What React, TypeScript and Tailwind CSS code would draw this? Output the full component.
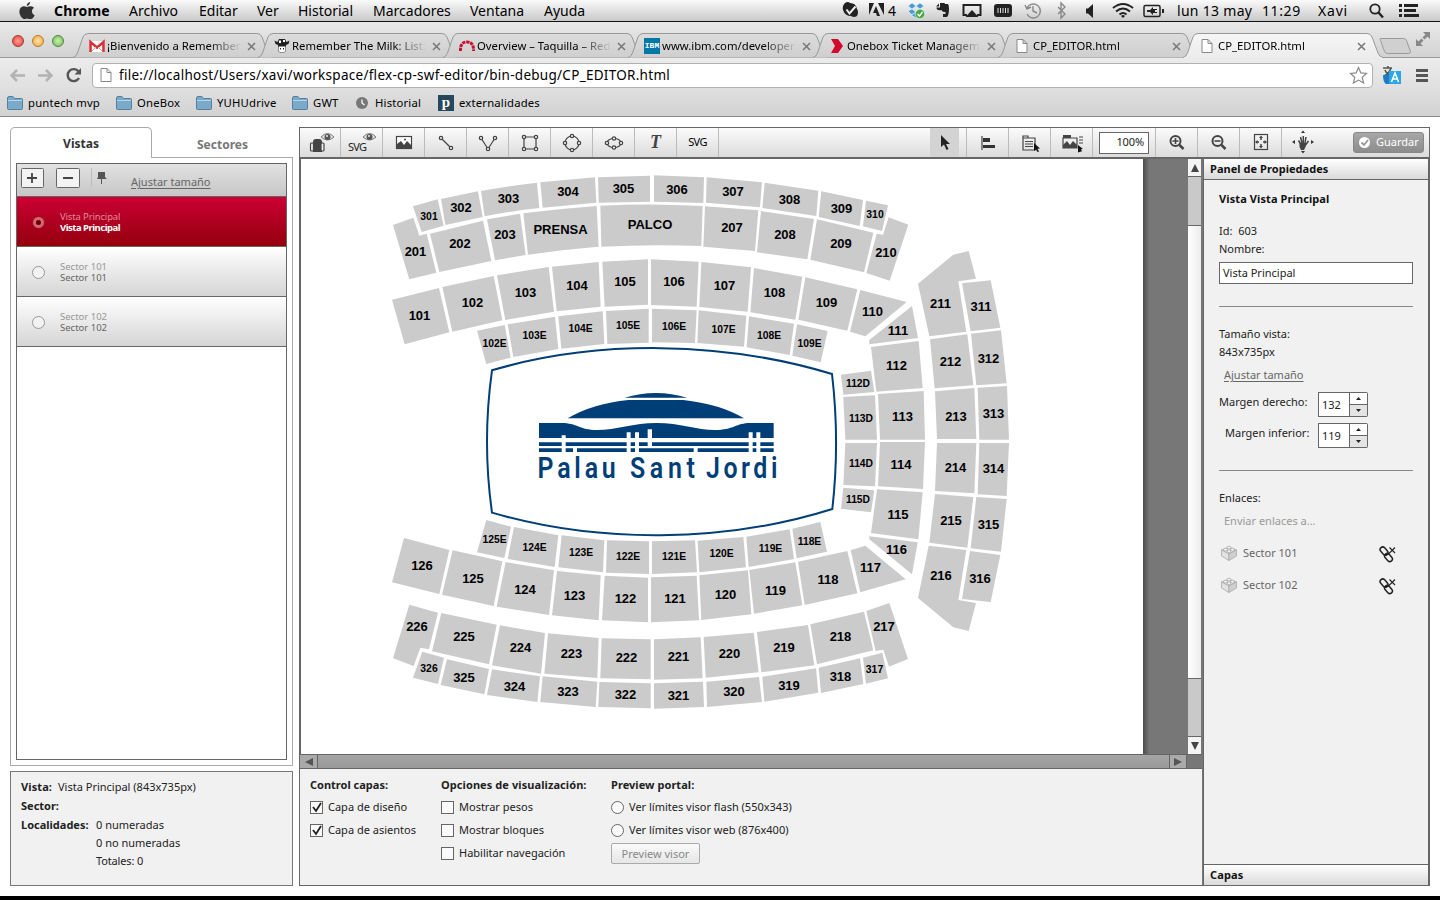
import React from "react";

type Block = [label: string, x: number, y: number, shape: string];
type Quadrant = { origin: string; blocks: Block[] };

// Block outlines are in third-of-a-pixel units from each quadrant's origin; labels are in canvas pixels.
const quadrants: Quadrant[] = [
  {
    origin: "translate(380 165) scale(.33333)",
    blocks: [
      ["301", 429, 217, "M99,124 173,103 191,182 125,201Z"],
      ["302", 461, 208, "M183,102 294,79 308,156 196,180Z"],
      ["303", 508.5, 199, "M303,78Q390,62 471,53L478,129Q400,137 314,154Z"],
      ["304", 568, 192, "M481,52 645,37 649,113 488,128Z"],
      ["305", 623.5, 189, "M654,37 810,32 810,110 656,113Z"],
      ["306", 677, 190, "M822,31 972,37 970,114 822,110Z"],
      ["201", 415.5, 252, "M39,180 100,158 118,212 140,206 169,323 88,343Z"],
      ["202", 460, 244, "M150,206 309,167 334,288 178,321Z"],
      ["203", 505, 235, "M321,163 420,146 437,270 345,286Z"],
      ["PRENSA", 560.5, 230, "M430,145Q540,131 650,123L656,245Q550,253 444,269Z"],
      ["PALCO", 650, 225, "M661,122Q815,114 968,123L964,243Q815,237 664,245Z"],
      ["101", 419.5, 316, "M36,404 177,369 208,502 74,538Z"],
      ["102", 472.5, 303, "M187,366 341,333 367,466 217,500Z"],
      ["103", 525.5, 293, "M351,331 506,306 522,440 376,465Z"],
      ["104", 577, 286, "M516,305 656,291 662,425 530,439Z"],
      ["105", 625, 282, "M667,290 804,283 804,419 674,425Z"],
      ["106", 674, 282, "M813,283 956,290 950,425 813,420Z"],
      ["102E", 494.5, 344, "M291,497 374,480 392,578 319,597Z"],
      ["103E", 534.5, 336, "M383,478 525,455 535,552 400,576Z"],
      ["104E", 580.5, 329, "M535,454 668,439 673,537 544,551Z"],
      ["105E", 628, 326, "M678,438 806,431 806,533 682,537Z"],
      ["106E", 674, 327, "M816,431 950,436 945,534 816,532Z"],
    ],
  },
  {
    origin: "translate(680 165) scale(.33333)",
    blocks: [
      ["307", 733, 192, "M80,37 246,52 240,127 78,113Z"],
      ["308", 789.5, 200, "M254,53 415,77 409,153 247,129Z"],
      ["309", 841.5, 209, "M424,79 549,105 539,183 416,156Z"],
      ["310", 875, 215, "M558,107 624,121 606,198 549,184Z"],
      ["207", 732, 228, "M75,124 235,136 225,258 70,245Z"],
      ["208", 785, 235, "M243,138 402,162 382,283 231,262Z"],
      ["209", 841, 244, "M411,163 580,203 552,322 391,284Z"],
      ["210", 886, 253, "M590,206 609,209 626,157 685,179 629,347 559,324Z"],
      ["107", 724.5, 286, "M64,291 213,307 203,440 58,426Z"],
      ["108", 774.5, 293, "M222,309 367,335 346,464 211,442Z"],
      ["109", 826.5, 303, "M376,337 532,373 502,497 355,464Z"],
      ["110", 872.5, 312, "M541,375 680,411 556,514 510,500Z"],
      ["107E", 723.5, 330, "M56,436 199,452 192,545 52,534Z"],
      ["108E", 769, 336, "M207,454 342,476 329,570 200,547Z"],
      ["109E", 809.5, 344, "M351,478 443,498 422,592 337,572Z"],
      ["111", 898, 331, "M696,423 714,519 568,538 568,525Z"],
      ["112", 896.5, 366, "M573,546 716,528 728,669 589,680Z"],
      ["113", 902.5, 417, "M594,687 731,678 735,824 600,824Z"],
      ["112D", 858, 384, "M483,629 573,617 583,681 490,689Z"],
      ["113D", 861, 419, "M490,696 585,691 591,824 496,824Z"],
      ["211", 940.5, 304, "M714,356 820,269 866,258 888,341 835,349 859,500 748,514Z"],
      ["311", 981, 307, "M846,355 932,346 961,488 872,499Z"],
      ["212", 950.5, 362, "M750,523 862,508 880,661 764,670Z"],
      ["312", 988.5, 359, "M873,506 963,496 980,655 889,661Z"],
      ["213", 956, 417, "M765,679 883,669 889,822 771,822Z"],
      ["313", 993.5, 414, "M893,668 981,663 987,824 898,824Z"],
    ],
  },
  {
    origin: "translate(380 500) scale(.33333)",
    blocks: [
      ["126", 422, 566, "M72,114 208,150 178,282 36,247Z"],
      ["125", 473, 579, "M218,151 367,184 341,318 186,284Z"],
      ["124", 525, 590, "M377,186 522,211 507,345 350,320Z"],
      ["123", 574.5, 596, "M531,213 662,226 656,361 516,346Z"],
      ["122", 625.5, 599, "M674,227 804,233 804,367 666,361Z"],
      ["121", 675, 599, "M813,232 950,227 957,361 813,367Z"],
      ["125E", 494.5, 540, "M319,60 393,80 373,174 291,157Z"],
      ["124E", 534.5, 548, "M402,81 535,106 524,201 383,177Z"],
      ["123E", 581, 553, "M545,106 673,121 669,217 535,202Z"],
      ["122E", 628, 557, "M681,121 807,124 807,222 678,218Z"],
      ["121E", 674, 557, "M816,124 945,121 951,217 816,222Z"],
      ["226", 417, 627, "M88,314 174,338 147,448 121,443 101,498 39,475Z"],
      ["225", 464, 637, "M184,339 350,374 327,493 156,454Z"],
      ["224", 520.5, 648, "M360,376 495,399 483,521 336,496Z"],
      ["223", 571.5, 654, "M504,400 656,414 652,534 493,521Z"],
      ["222", 626.5, 658, "M665,415 812,418 812,538 661,535Z"],
      ["221", 678.5, 657, "M822,418 962,412 968,535 822,539Z"],
      ["326", 429, 669, "M127,455 192,473 174,552 99,533Z"],
      ["325", 464, 678, "M201,478 327,507 313,583 182,555Z"],
      ["324", 514.5, 687, "M336,508 480,529 472,606 321,585Z"],
      ["323", 568, 692, "M488,529 652,545 647,621 481,606Z"],
      ["322", 625.5, 695, "M658,546 812,550 812,625 655,621Z"],
      ["321", 678.5, 696, "M822,550 969,545 972,621 822,626Z"],
    ],
  },
  {
    origin: "translate(680 440) scale(.33333)",
    blocks: [
      ["120", 725.5, 595, "M58,406 204,391 214,523 64,540Z"],
      ["119", 775.5, 591, "M208,390 346,367 367,496 222,521Z"],
      ["118", 828, 580, "M354,365 502,333 532,460 374,495Z"],
      ["117", 870.5, 568, "M512,331 556,317 677,418 541,457Z"],
      ["120E", 721.5, 554, "M53,302 190,291 198,382 58,397Z"],
      ["119E", 770.5, 549, "M199,290 329,268 342,357 206,381Z"],
      ["118E", 809.5, 542, "M337,266 421,246 441,335 350,355Z"],
      ["220", 729.5, 654, "M71,591 221,578 236,697 77,713Z"],
      ["219", 784, 648, "M231,576 384,555 403,676 244,697Z"],
      ["218", 840.5, 637, "M391,553 552,515 580,631 411,673Z"],
      ["217", 884, 627, "M559,513 628,489 684,657 627,680 610,629 587,633Z"],
      ["320", 734, 692, "M79,725 237,711 246,786 81,801Z"],
      ["319", 789, 686, "M247,710 408,685 415,758 253,785Z"],
      ["318", 840.5, 677, "M416,683 540,655 550,732 423,759Z"],
      ["317", 874.5, 670, "M549,653 607,638 624,715 558,731Z"],
      ["114D", 861, 464, "M496,9 591,9 585,139 490,135Z"],
      ["115D", 858, 500, "M490,143 583,151 573,217 483,206Z"],
      ["114", 901, 465, "M600,6 735,6 729,147 594,139Z"],
      ["115", 898, 515, "M591,148 728,157 715,298 573,279Z"],
      ["116", 896.5, 550, "M568,289 713,307 696,403 568,298Z"],
      ["214", 955.5, 468, "M771,9 889,9 883,160 765,153Z"],
      ["314", 993.5, 469, "M898,9 987,9 980,168 893,163Z"],
      ["215", 951, 521, "M765,162 880,171 862,323 748,308Z"],
      ["315", 988.5, 525, "M889,171 980,177 963,335 872,325Z"],
      ["216", 941, 576, "M746,317 859,330 835,480 888,489 866,573 820,562 714,474Z"],
      ["316", 980, 579, "M870,333 961,345 932,486 846,477Z"],
    ],
  },
];

const smallLabels = new Set(["301", "310", "326", "317"]);

function VenueMap() {
  return (
    <svg className="block h-[595px] w-[842px] shrink-0 bg-white" viewBox="301 159 842 595">
      {quadrants.map((q) => (
        <g key={q.origin} transform={q.origin} className="fill-[#cbcbcb]">
          {q.blocks.map(([label, , , d]) => (
            <path key={label} d={d} />
          ))}
        </g>
      ))}
      <g className="fill-black font-['Liberation_Sans',sans-serif] font-bold" textAnchor="middle">
        {quadrants.flatMap((q) =>
          q.blocks.map(([label, x, y]) => {
            const lettered = /\d[ED]$/.test(label);
            const small = smallLabels.has(label);
            return (
              <text key={label} x={x} y={y + (lettered || small ? 3.2 : 3.9)} fontSize={lettered ? 10.3 : small ? 10.4 : 13}>
                {label}
              </text>
            );
          }),
        )}
      </g>
      <g transform="translate(470 340) scale(.33333)" className="fill-[#003e78]">
        <path
          d="M66,91C380,-2 760,3 1086,102Q1110,305 1087,507C760,610 380,610 66,518Q36,305 66,91Z"
          fill="none"
          className="fill-none"
          stroke="#003e78"
          strokeWidth="6"
        />
        <path d="M463,173Q558,145 652,173Z" />
        <path d="M293,235Q370,190 475,180H640Q750,192 822,235Z" />
        <path d="M207,249H275C320,249 330,270 380,270C440,270 490,249 560,249C630,249 680,270 735,270C790,270 800,249 840,249H911V294H207Z" />
        <path d="M207,307H911V318H207ZM207,325H911V336H207Z" />
        <path
          className="fill-white"
          d="M275,286h12v54h-12zM470,277h12v63h-12zM495,277h12v63h-12zM533,268h13v52h-13zM836,277h12v63h-12zM859,277h12v63h-12zM309,322h12v18h-12zM671,322h12v18h-12z"
        />
      </g>
      <g className="fill-[#003e78] font-[Roboto,sans-serif] font-semibold" fontSize="29">
        <text transform="translate(537.500 478) scale(.86 1)" textLength="91">Palau</text>
        <text transform="translate(630 478) scale(.86 1)" textLength="75.500">Sant</text>
        <text transform="translate(706 478) scale(.86 1)" textLength="83">Jordi</text>
      </g>
    </svg>
  );
}

const menus: [string, string][] = [
  ["Archivo", "w-[70px]"],
  ["Editar", "w-[58px]"],
  ["Ver", "w-[41px]"],
  ["Historial", "w-[75px]"],
  ["Marcadores", "w-[97px]"],
  ["Ventana", "w-[74px]"],
  ["Ayuda", "w-[60px]"],
];

function StatusIcons() {
  return (
    <svg className="h-[21px] w-[330px]" viewBox="840 0 330 21" fill="#222">
      <path d="M845 3q3-2 5 0q6 0 7 6q2 3 0 7q-3 2-6 0q-6 0-8-6q-1-4 2-7z" />
      <path d="M846.500 9.500l3 4l6-7" fill="none" stroke="#eee" strokeWidth="2" />
      <path d="M869 3h5l-5 12zM878 3h6v12zM876 6l4 10h-3l-1-3h-3z" />
      <g fill="#4b9bd8" stroke="#fff" strokeWidth=".5">
        <path d="M908 6l4-3l4 3l-4 3zM916 6l4-3l4 3l-4 3zM908 11l4-2l4 3l-4 3zM916 12l4-3l4 2l-4 4zM911 15l5-3l5 3l-5 3z" />
        <circle cx="920" cy="14" r="4.700" fill="#49a942" />
      </g>
      <path d="M917.500 14l2 2l3-4" fill="none" stroke="#fff" strokeWidth="1.300" />
      <path d="M936 6.500l3-3v3zM940 3h4q1 0 1 1h3q1 1 1 5q0 6-2 8h-4v-3h2.500v-2q-3.500 0-4-2q-5 1-5-2.500h3.500z" />
      <path d="M967 15h-3.500V5h17v10H977" fill="none" stroke="#222" strokeWidth="2" />
      <path d="M965.500 17l6.500-7l6.500 7z" />
      <rect x="994" y="4" width="18" height="13" rx="3" />
      <path d="M998 8v5M1000.500 8v5M1003 8v5M1005.500 8v5M1008 8v5" stroke="#ddd" />
      <g fill="none" stroke="#888" strokeWidth="1.400">
        <path d="M1027 8a7 7 0 1 1 0 6M1025 5l2 4l4-2M1033 6v5l4 2" />
        <path d="M1058 7l7 7l-4 4V3l4 4l-7 7" />
      </g>
      <path d="M1086 8.500h2l5-4.500v14l-5-4.500h-2z" />
      <g fill="none" stroke="#222" strokeWidth="2">
        <path d="M1113 8q10-8 20 0M1116 11.500q7-6 14 0M1119.500 14.500q3.500-3 7 0" />
        <rect x="1144" y="5.500" width="16" height="11" rx="1.500" strokeWidth="1.500" />
      </g>
      <path d="M1121 16l2 2l2-2q-2-2-4 0zM1162 9h2v4h-2zM1147 10h3l3-3v2h4v1h-2v2h2v1h-4v2l-3-3h-3z" />
    </svg>
  );
}

function MenuBar() {
  return (
    <header className="flex h-[22px] items-center border-b border-[#111] bg-linear-to-b from-[#fafafa] to-[#c9c9c9] text-[14px] leading-[21px] text-black">
      <svg className="ml-[19px] h-[19px] w-4" viewBox="0 0 16 19">
        <path
          d="M11 1q0 3-3.200 4Q7.600 2 11 1zM8 6q2-1 4-.8q2 .2 3 1.600q-2.500 1.700-2 4.200q.4 2.300 2.600 3.200Q14 18 12 18t-4-.5Q6 18 4.500 18Q2 17 .7 13Q-.5 8 2.500 6Q4.500 4.700 8 6z"
          fill="#333"
        />
      </svg>
      <span className="ml-[19px] w-[75px] font-bold tracking-[.15px]">Chrome</span>
      {menus.map(([label, width]) => (
        <span key={label} className={width}>{label}</span>
      ))}
      <div className="relative ml-[236px] w-[330px]">
        <StatusIcons />
        <span className="absolute top-0 left-[48px] text-[14px]">4</span>
      </div>
      <span className="ml-[7px] w-[85px] tracking-[.3px]">lun 13 may</span>
      <span className="w-[56px] tracking-[.6px]">11:29</span>
      <span className="w-[50px] tracking-[.8px]">Xavi</span>
      <svg className="h-[21px] w-[54px]" viewBox="1368 0 54 21" fill="none" stroke="#222">
        <circle cx="1375" cy="9" r="4.700" strokeWidth="1.800" />
        <path d="M1378.500 12.500l4.500 5" strokeWidth="2.400" />
        <path d="M1399 5.500h3M1404 5.500h14M1399 10.500h3M1404 10.500h12M1399 15.500h3M1404 15.500h15" strokeWidth="3" />
      </svg>
    </header>
  );
}

function PageIcon() {
  return (
    <svg className="h-4 w-3 shrink-0" viewBox="0 0 12 16">
      <path d="M1 1.500h6l4 4v9H1zM7 1.500v4h4" fill="#fff" stroke="#888" />
    </svg>
  );
}

const favicons: Record<string, React.ReactNode> = {
  mail: (
    <svg className="h-4 w-4" viewBox="0 0 16 16">
      <path d="M0 3h16v11H0z" fill="#fff" />
      <path d="M1.500 14V4L8 9.500L14.500 4v10" fill="none" stroke="#d8333a" strokeWidth="2.600" />
      <path d="M3 13l4-4M13 13L9 9" stroke="#e99" />
    </svg>
  ),
  cow: (
    <svg className="h-4 w-4" viewBox="0 0 16 16">
      <path d="M.5 2.500l3 1.500L5 1h6l1.500 3l3-1.500l-1 3.500l-2.500 1v6q-4 4-8 0V7L1.500 6z" fill="#222" />
      <path d="M5 2.500h2V5H5zM9 2h2v2H9zM4.500 8.500h7v4.500q-3.500 3-7 0z" fill="#fff" />
      <path d="M6.500 10v1.500M9.500 10v1.500" stroke="#222" />
    </svg>
  ),
  arch: (
    <svg className="h-4 w-4" viewBox="0 0 16 16">
      <path d="M1.500 13Q1 4 8 4t6.500 9" fill="none" stroke="#c8102e" strokeWidth="3" strokeDasharray="3.200 .8" />
    </svg>
  ),
  ibm: (
    <span className="flex h-4 w-4 items-center justify-center bg-[#0078a5] font-['Liberation_Mono',monospace] text-[8px] font-bold text-white">IBM</span>
  ),
  arrow: (
    <svg className="h-4 w-4" viewBox="0 0 16 16">
      <path d="M2 1h7l5 7l-5 7H2l4-7z" fill="#d4072c" />
    </svg>
  ),
  page: <PageIcon />,
};

const tabs: [string, string, boolean][] = [
  ["mail", "¡Bienvenido a Remember", false],
  ["cow", "Remember The Milk: List:", false],
  ["arch", "Overview – Taquilla – Red", false],
  ["ibm", "www.ibm.com/developer", false],
  ["arrow", "Onebox Ticket Managem", false],
  ["page", "CP_EDITOR.html", false],
  ["page", "CP_EDITOR.html", true],
];

function BrowserTab({ icon, title, active }: { icon: string; title: string; active: boolean }) {
  const top = active ? "#f6f6f6" : "#dcdcdc";
  const bottom = active ? "#ececec" : "#cfcfcf";
  const id = active ? "tab-on" : "tab-off";
  return (
    <div className="relative flex h-[24px] w-[185px] shrink-0 items-center pt-0.5 pl-2">
      <svg className="absolute top-0 left-[-8px] h-[25px] w-[201px]" viewBox="0 0 201 25">
        <defs>
          <linearGradient id={id} x2="0" y2="1">
            <stop stopColor={top} />
            <stop offset="1" stopColor={bottom} />
          </linearGradient>
        </defs>
        <path d="M0 24.500Q3 24 4.500 20L10 4Q11.500 .5 15 .5H184Q187.500 .5 189 4L195 20Q196.500 24 200 24.500" fill={`url(#${id})`} stroke="#999" />
        {active && <path d="M1 24.500H199" stroke="#ececec" />}
      </svg>
      <span className="relative flex w-4 shrink-0 justify-center">{favicons[icon]}</span>
      <span
        className={`relative ml-0.5 w-[135px] text-[11.3px] leading-4 whitespace-nowrap text-black mask-r-from-75% mask-r-to-100% ${
          icon === "page" ? "pl-px" : ""
        }`}
      >
        {title}
      </span>
      <svg className="relative ml-[5px] h-[9px] w-[9px]" viewBox="0 0 9 9" stroke="#777" strokeWidth="1.500">
        <path d="M1 1l7 7M8 1l-7 7" />
      </svg>
    </div>
  );
}

function TabStrip() {
  return (
    <div className="flex h-[36px] items-end border-b border-[#999] bg-linear-to-b from-[#e9e9e9] to-[#d2d2d2]">
      <div className="flex w-[81px] shrink-0 gap-2 self-center pt-0.5 pl-3">
        <span className="size-3 rounded-full border border-[#a33] bg-radial from-[#ff9a94] to-[#dd3a38]" />
        <span className="size-3 rounded-full border border-[#b77b28] bg-radial from-[#ffe0a0] to-[#eda63a]" />
        <span className="size-3 rounded-full border border-[#4c8a3a] bg-radial from-[#c9f0b0] to-[#6cba50]" />
      </div>
      {tabs.map(([icon, title, active], i) => (
        <BrowserTab key={i} icon={icon} title={title} active={active} />
      ))}
      <svg className="h-[34px] w-[62px] shrink-0" viewBox="1376 23 62 34">
        <path d="M1380.500 38.500h23q2 0 3 2l4 11q0 2-2 2h-21q-2 0-3-2l-4-11q-1-2 0-2z" fill="#d0d0d0" stroke="#999" />
        <path d="M1423 32h7v7l-2.500-2.500l-3 3l-2-2l3-3zM1416 39l2.500 2.500l3-3l2 2l-3 3l2.500 2.500h-7z" fill="#888" />
      </svg>
    </div>
  );
}

function AddressBar() {
  return (
    <div className="flex h-[34px] items-center bg-linear-to-b from-[#ececec] to-[#dedede]">
      <svg className="h-[34px] w-[92px] shrink-0" viewBox="0 58 92 34" fill="none">
        <path d="M25 75.500H11.500M17 70l-5.500 5.500L17 81M38 75.500h13.500M46 70l5.500 5.500L46 81" stroke="#b3b3b3" strokeWidth="2.500" />
        <path d="M78.500 71.500a6 6 0 1 0 .5 6.500" stroke="#555" strokeWidth="2.400" />
        <path d="M81 68v6.500h-6.500z" fill="#555" />
      </svg>
      <div className="flex h-[25px] w-[1281px] shrink-0 items-center rounded-sm border border-[#b0b0b0] bg-white pl-[7px]">
        <PageIcon />
        <span className="ml-[7px] flex-1 text-[13.500px] leading-[22px] tracking-[.28px] text-black">
          file://localhost/Users/xavi/workspace/flex-cp-swf-editor/bin-debug/CP_EDITOR.html
        </span>
        <svg className="mr-[4px] h-[19px] w-[19px]" viewBox="0 0 20 20">
          <path d="M10 1.500l2.500 5.800l6 .5l-4.600 4l1.500 6.200L10 14.800L4.600 18l1.500-6.200l-4.600-4l6-.5z" fill="#fff" stroke="#888" strokeWidth="1.200" />
        </svg>
      </div>
      <svg className="ml-[9px] h-5 w-[50px]" viewBox="0 0 50 20">
        <path d="M1 3h9M6 1v2M9 3q-2 6-7 8M3 5q2 5 7 6" fill="none" stroke="#555" strokeWidth="1.600" />
        <path d="M1 10h7v9H4q-3-2-3-9z" fill="#1d7cc4" />
        <rect x="7" y="6" width="12" height="13" fill="#28a8ea" />
        <path d="M9.500 17l3.500-9l3.500 9M11 14h4" fill="none" stroke="#fff" strokeWidth="1.600" />
        <path d="M34 5.500h12M34 10.500h12M34 15.500h12" stroke="#555" strokeWidth="3" />
      </svg>
    </div>
  );
}

const bookmarks: [string, string, string][] = [
  ["folder", "puntech mvp", "w-[109px]"],
  ["folder", "OneBox", "w-[80px]"],
  ["folder", "YUHUdrive", "w-[96px]"],
  ["folder", "GWT", "w-[62px]"],
  ["clock", "Historial", "w-[84px]"],
  ["p", "externalidades", "w-[120px]"],
];

function Bookmarks() {
  return (
    <nav className="flex h-[25px] items-center border-b border-[#888] bg-linear-to-b from-[#dedede] to-[#d2d2d2] pb-0.5 pl-[7px] text-[11.300px] tracking-[.18px] text-black">
      {bookmarks.map(([icon, label, width]) => (
        <div key={label} className={`flex shrink-0 items-center ${width}`}>
          {icon === "folder" && (
            <svg className="mr-[5px] h-[14px] w-4" viewBox="0 0 16 14">
              <path d="M.5 2Q.5.500 2 .5h4l1.500 2h7q1 0 1 1v9q0 1-1 1h-13q-1 0-1-1z" fill="#7ba9c9" stroke="#5480a0" />
              <path d="M1 4.500h14" stroke="#b7d4e8" />
            </svg>
          )}
          {icon === "clock" && (
            <svg className="mr-[7px] ml-0.5 h-3 w-3" viewBox="0 0 12 12">
              <circle cx="6" cy="6" r="6" fill="#777" />
              <path d="M6 2.500V6l2.500 2" fill="none" stroke="#fff" strokeWidth="1.300" />
            </svg>
          )}
          {icon === "p" && (
            <span className="mr-[5px] flex size-4 items-center justify-center bg-[#27485c] pb-0.5 font-['Liberation_Serif',serif] text-[15px] leading-none font-bold text-white">p</span>
          )}
          <span className="leading-4">{label}</span>
        </div>
      ))}
    </nav>
  );
}

function ViewRow({ title, selected = false }: { title: string; selected?: boolean }) {
  return (
    <div
      className={`flex h-[50px] items-center border-b border-[#666] pt-px pl-[15px] text-[9.500px] leading-[11px] ${
        selected
          ? "bg-linear-to-b from-[#cc0033] to-[#94000c] tracking-[-.15px] text-white"
          : "bg-linear-to-b from-white to-[#d5d5d5] text-[#666]"
      }`}
    >
      {selected ? (
        <span className="flex size-[13px] items-center justify-center rounded-full border border-[#911] bg-[#d8647a]">
          <span className="size-[5px] rounded-full bg-[#600]" />
        </span>
      ) : (
        <span className="size-[13px] rounded-full border border-[#999] bg-[#f2f2f2]" />
      )}
      <div className="ml-[15px] flex flex-col">
        <span className={selected ? "text-[#e58a9b]" : "text-[#999]"}>{title}</span>
        <span className={selected ? "font-bold tracking-[-.5px]" : ""}>{title}</span>
      </div>
    </div>
  );
}

function LeftColumn() {
  return (
    <aside className="flex w-[283px] shrink-0 flex-col">
      <div className="flex h-[31px] text-[12px] font-bold">
        <div className="flex w-[142px] items-center justify-center rounded-t-[5px] border border-b-0 border-[#aaa] pt-px text-[#333]">Vistas</div>
        <div className="flex flex-1 items-center justify-center border-b border-[#aaa] pt-[5px] text-[#777]">Sectores</div>
      </div>
      <div className="h-[608px] border border-t-0 border-[#aaa] p-[5px]">
        <div className="h-full border border-[#666] bg-white">
          <div className="flex h-[33px] border-b border-[#666] bg-linear-to-b from-[#e2e2e2] to-[#c6c6c6] pt-1">
            <svg className="h-[22px] w-[90px]" viewBox="17 168 90 22">
              <rect x="21.500" y="168.500" width="22" height="19" rx="1" fill="#f3f3f3" stroke="#666" />
              <rect x="56.500" y="168.500" width="23" height="19" rx="1" fill="#f3f3f3" stroke="#666" />
              <path d="M27 178h10M32 173v10M63 178h10" stroke="#444" strokeWidth="1.800" />
              <path d="M91.500 168v18" stroke="#bbb" />
              <path d="M98 172h7v5l2 2H97l1-2z" fill="#555" />
              <path d="M101.500 178v6" stroke="#555" />
            </svg>
            <span className="ml-6 pt-1 text-[11px] leading-5 text-[#666] underline underline-offset-2">Ajustar tamaño</span>
          </div>
          <ViewRow title="Vista Principal" selected />
          <ViewRow title="Sector 101" />
          <ViewRow title="Sector 102" />
        </div>
      </div>
      <section className="mt-[5px] h-[115px] border border-[#777] bg-[#f1f1f1] pt-1.5 pl-2.5 text-[11px] leading-[18px] text-[#222]">
        <p className="h-[19px]"><b className="mr-1.5 tracking-[.1px]">Vista:</b>Vista Principal (843x735px)</p>
        <p className="h-[19px]"><b>Sector:</b></p>
        <div className="flex">
          <b className="w-[75px]">Localidades:</b>
          <div className="flex flex-col">
            <span>0 numeradas</span>
            <span>0 no numeradas</span>
            <span className="tracking-[-.15px]">Totales: 0</span>
          </div>
        </div>
      </section>
    </aside>
  );
}

function Tool({ children, width = "w-[42px]" }: { children: React.ReactNode; width?: string }) {
  return <div className={`flex h-full shrink-0 items-center justify-center border-r border-[#bbb] ${width}`}>{children}</div>;
}

function Glyph({ children }: { children: React.ReactNode }) {
  return (
    <svg className="h-7 w-9" viewBox="-18 -14 36 28" fill="none" stroke="#444" strokeWidth="1.200">
      {children}
    </svg>
  );
}

function Eye() {
  return (
    <g transform="translate(7.500 -6)">
      <path d="M-6.500 0Q0-7 6.500 0Q0 6-6.500 0z" fill="#e4e4e4" stroke="#777" strokeWidth="1" />
      <circle r="3" fill="#555" stroke="none" />
      <circle r="1" cx="-.5" cy="-1" fill="#eee" stroke="none" />
    </g>
  );
}

function Nodes({ at }: { at: [number, number][] }) {
  return (
    <>
      {at.map(([x, y]) => (
        <circle key={`${x},${y}`} cx={x} cy={y} r="1.700" fill="#eee" />
      ))}
    </>
  );
}

function Toolbar() {
  return (
    <div className="flex h-[31px] items-center border-b-2 border-[#666] bg-linear-to-b from-[#fbfbfb] to-[#dcdcdc]">
      <Tool width="w-[41px]">
        <Glyph>
          <path d="M-7 9V-1q0-3 3-3h3q3 0 3 3v10z" fill="#444" stroke="none" />
          <rect x="-9.500" y="0" width="3" height="8" rx="1" fill="#eee" />
          <rect x="1" y="0" width="3" height="8" rx="1" fill="#eee" />
          <Eye />
        </Glyph>
      </Tool>
      <Tool>
        <Glyph>
          <text x="-14" y="7.500" className="fill-[#222] text-[11px]" stroke="none" textLength="19">SVG</text>
          <Eye />
        </Glyph>
      </Tool>
      <Tool>
        <Glyph>
          <rect x="-7.500" y="-6.500" width="15" height="12" fill="#fff" />
          <path d="M-7 5V1l4-3l3 4l3-4l4 4v3z" fill="#444" stroke="none" />
          <circle cx="1" cy="-3.500" r="1" fill="#444" stroke="none" />
        </Glyph>
      </Tool>
      <Tool>
        <Glyph><path d="M-5-5L5 5" /><Nodes at={[[-5, -5], [5, 5]]} /></Glyph>
      </Tool>
      <Tool>
        <Glyph><path d="M-7-5L0 6L7-5" /><Nodes at={[[-7, -5], [0, 6], [7, -5]]} /></Glyph>
      </Tool>
      <Tool>
        <Glyph><path d="M-6-6H6V6H-6z" /><Nodes at={[[-6, -6], [6, -6], [6, 6], [-6, 6]]} /></Glyph>
      </Tool>
      <Tool>
        <Glyph><circle r="7" /><Nodes at={[[0, -7], [7, 0], [0, 7], [-7, 0]]} /></Glyph>
      </Tool>
      <Tool>
        <Glyph><ellipse rx="7" ry="4.500" /><Nodes at={[[0, -4.5], [7, 0], [0, 4.5], [-7, 0]]} /></Glyph>
      </Tool>
      <Tool>
        <span className="font-['Liberation_Serif',serif] text-[18px] font-bold text-[#444] italic">T</span>
      </Tool>
      <Tool><span className="text-[11px] tracking-[-.6px] text-black">SVG</span></Tool>
      <div className="flex h-full w-[248px] shrink-0 items-stretch justify-end border-r border-[#bbb] pr-[7px]">
        <div className="flex w-[29px] items-center justify-center bg-[#d3d3d3]">
          <svg className="h-4 w-3" viewBox="0 0 12 16">
            <path d="M2 0v12l3-2.500l2.500 5.500l2-1l-2.500-5h4z" fill="#222" />
          </svg>
        </div>
      </div>
      <Tool>
        <Glyph>
          <path d="M-6-7V7" />
          <path d="M-5-5H2V-1H-5zM-5 2H7V5H-5z" fill="#333" stroke="none" />
        </Glyph>
      </Tool>
      <Tool>
        <Glyph>
          <path d="M-7-7h5v2h7V7H-7zM-7-5h5M-5-1.500H3M-5 1H3M-5 3.500H3" />
          <path d="M4 0l6 5.500l-2.500 .2l1.500 2.800l-1.500 .5l-1.500-2.500l-2 1.500z" fill="#111" stroke="none" />
        </Glyph>
      </Tool>
      <Tool>
        <Glyph>
          <path d="M-9-5h14V5H-9zM7-6h4M7-3h4M7 0h4" />
          <path d="M-9 5V2l4-4l3 4l3-4l4 4v3zM-9-8h8v3h-8z" fill="#444" stroke="none" />
          <path d="M6 2l5 4l-2 .2l1 2.300h-1l-3 1z" fill="#111" stroke="none" />
        </Glyph>
      </Tool>
      <div className="flex h-full w-[63px] shrink-0 items-center justify-center border-r border-[#bbb]">
        <span className="flex h-[22px] w-[50px] items-center justify-end border border-[#666] bg-white pr-1 text-[11px] tracking-[-.1px] text-[#222]">100%</span>
      </div>
      {[true, false].map((plus) => (
        <Tool key={String(plus)}>
          <Glyph>
            <circle cx="-1.500" cy="-2" r="5" strokeWidth="2" />
            <path d="M2.500 2L6.500 6" strokeWidth="2.500" />
            <path d={plus ? "M-4.500-2h6M-1.500-5v6" : "M-4.500-2h6"} strokeWidth="1.600" />
          </Glyph>
        </Tool>
      ))}
      <Tool>
        <Glyph>
          <rect x="-6.500" y="-8.500" width="13" height="15" />
          <path d="M0-6v3M0 1v3M-5-1h3M2-1h3" strokeWidth="1.500" />
          <path d="M-2-5L0-7.500L2-5zM-2 3L0 5.500L2 3zM-3.500-3L-6-1L-3.500 1zM3.500-3L6-1L3.500 1z" fill="#444" stroke="none" />
        </Glyph>
      </Tool>
      <div className="flex w-[42px] shrink-0 items-center justify-center">
        <Glyph>
          <path d="M-4.500-2.500l2.500 4M-2.500-6l1.500 6M.3-7v7M3-6l-1 6M5.500-2L2.500 2" strokeWidth="1.500" />
          <path d="M-3.500 0h6.500v3l-2 4h-3l-1.500-3z" fill="#444" stroke="none" />
          <path d="M0-12.500l2 2.500h-4zM0 10.500l2-2.500h-4zM-11-1l3-2v4zM11-1l-3-2v4z" fill="#333" stroke="none" />
        </Glyph>
      </div>
      <div className="ml-[29px] flex h-[21px] w-[71px] shrink-0 items-center rounded-[3px] border border-[#888] bg-linear-to-b from-[#a8a8a8] to-[#8c8c8c] pl-[5px] text-[11px] text-white">
        <svg className="mr-[6px] h-[11px] w-[11px] shrink-0" viewBox="0 0 11 11">
          <circle cx="5.500" cy="5.500" r="5.500" fill="#fff" />
          <path d="M2.500 5.500l2.500 2.500l4-5" fill="none" stroke="#999" strokeWidth="1.800" />
        </svg>
        Guardar
      </div>
    </div>
  );
}

function VerticalScroll() {
  return (
    <div className="flex w-[15px] flex-col border-x border-[#777] bg-[#c9c9c9]">
      <div className="flex h-[18px] items-center justify-center border-b border-[#666] bg-[#f4f4f4]">
        <svg className="h-2 w-2" viewBox="0 0 8 8"><path d="M4 0l4 8H0z" fill="#444" /></svg>
      </div>
      <div className="mt-[48px] h-[454px] border-y border-[#666] bg-linear-to-r from-white to-[#ececec]" />
      <div className="mt-auto flex h-[18px] items-center justify-center border-t border-[#666] bg-[#f4f4f4]">
        <svg className="h-2 w-2" viewBox="0 0 8 8"><path d="M4 8L0 0h8z" fill="#444" /></svg>
      </div>
    </div>
  );
}

function HorizontalScroll() {
  return (
    <div className="flex h-[15px] border-y border-[#666] bg-[#777]">
      <div className="flex w-[18px] items-center justify-center border-r border-[#666] bg-[#aaa]">
        <svg className="h-2 w-2" viewBox="0 0 8 8"><path d="M0 4l8-4v8z" fill="#555" /></svg>
      </div>
      <div className="w-[851px] bg-linear-to-b from-[#a5a5a5] to-[#999]" />
      <div className="flex w-[18px] items-center justify-center border-x border-[#666] bg-[#aaa]">
        <svg className="h-2 w-2" viewBox="0 0 8 8"><path d="M8 4L0 0v8z" fill="#555" /></svg>
      </div>
    </div>
  );
}

function Option({ label, kind = "box", checked = false }: { label: string; kind?: "box" | "radio"; checked?: boolean }) {
  return (
    <div className="flex h-[23px] items-center">
      <span className={`mr-[5px] flex size-[13px] shrink-0 items-center justify-center border border-[#666] bg-[#fafafa] ${kind === "radio" ? "rounded-full" : ""}`}>
        {checked && (
          <svg className="h-[11px] w-[11px]" viewBox="0 0 11 11"><path d="M2 5l3 4l5-8" fill="none" stroke="#222" strokeWidth="1.800" /></svg>
        )}
      </span>
      {label}
    </div>
  );
}

function DisplayOptions() {
  return (
    <section className="flex h-[116px] bg-[#f1f1f1] pt-[8px] pl-[10px] text-[11px] text-[#222]">
      <div className="w-[131px]">
        <h3 className="h-[19px] font-bold">Control capas:</h3>
        <Option label="Capa de diseño" checked />
        <Option label="Capa de asientos" checked />
      </div>
      <div className="w-[170px]">
        <h3 className="h-[19px] font-bold tracking-[.08px]">Opciones de visualización:</h3>
        <Option label="Mostrar pesos" />
        <Option label="Mostrar bloques" />
        <Option label="Habilitar navegación" />
      </div>
      <div>
        <h3 className="h-[19px] font-bold tracking-[.05px]">Preview portal:</h3>
        <Option label="Ver límites visor flash (550x343)" kind="radio" />
        <Option label="Ver límites visor web (876x400)" kind="radio" />
        <button className="mt-px h-[21px] w-[89px] rounded-[2px] border border-[#aaa] bg-linear-to-b from-[#fafafa] to-[#e6e6e6] text-[11px] leading-4 text-[#888]">Preview visor</button>
      </div>
    </section>
  );
}

function Spinner({ label, value, first = false }: { label: string; value: number; first?: boolean }) {
  return (
    <div className="mb-[6px] flex h-[25px]">
      <span className={`leading-5 ${first ? "w-[99px]" : "w-[93px] ml-1.5"}`}>{label}</span>
      <span className="flex w-8 items-center border border-[#666] bg-white pl-[3px]">{value}</span>
      <div className="flex w-[18px] flex-col rounded-r-[2px] border border-l-0 border-[#666]">
        <span className="flex h-3 items-center justify-center border-b border-[#666] bg-white">
          <svg className="h-[3px] w-[5px]" viewBox="0 0 5 3"><path d="M0 3h5L2.500 0z" fill="#222" /></svg>
        </span>
        <span className="flex flex-1 items-center justify-center bg-[#e4e4e4]">
          <svg className="h-[3px] w-[5px]" viewBox="0 0 5 3"><path d="M0 0h5L2.500 3z" fill="#222" /></svg>
        </span>
      </div>
    </div>
  );
}

function LinkRow({ label }: { label: string }) {
  return (
    <div className="flex h-8 items-center pl-0.5 text-[#666]">
      <svg className="mr-1.5 h-4 w-4" viewBox="0 0 16 16" stroke="#aaa" strokeWidth=".8">
        <path d="M.5 5L8 2l7.500 3L8 9z" fill="#f6f6f6" />
        <path d="M.5 5L8 9v6.500L.5 11z" fill="#e2e2e2" />
        <path d="M15.500 5L8 9v6.500l7.500-4.500z" fill="#cfcfcf" />
        <path d="M6 2q2-2 4 0v1.500q-2 1-4 0zM2.500 4q2-1.500 4 0v1.500q-2 1-4 0zM9.500 4q2-1.500 4 0v1.500q-2 1-4 0zM6 5.500q2-1.500 4 0V7q-2 1-4 0z" fill="#f4f4f4" />
      </svg>
      <span className="w-[136px]">{label}</span>
      <svg className="mt-0.5 h-[17px] w-[17px]" viewBox="0 0 17 17" fill="none" stroke="#222">
        <rect x="-2.600" y="-4.500" width="5.200" height="9" rx="2.600" transform="translate(5 5) rotate(-42)" strokeWidth="1.500" />
        <rect x="-2.600" y="-4.500" width="5.200" height="9" rx="2.600" transform="translate(9.500 11.500) rotate(-42)" strokeWidth="1.500" />
        <path d="M10.500 1.500l5.500 5.500M16 1.500L10.500 7L7 9.500" strokeWidth="1.100" />
      </svg>
    </div>
  );
}

function PropertiesPanel() {
  return (
    <aside className="flex w-[226px] shrink-0 flex-col border-x border-[#666] bg-[#f1f1f1] text-[11px] leading-[18px] text-[#222]">
      <h2 className="h-[21px] border-b border-[#666] bg-linear-to-b from-white to-[#dadada] pl-1.5 leading-[20px] font-bold tracking-[.05px] text-[#111]">Panel de Propiedades</h2>
      <div className="flex flex-1 flex-col px-[15px]">
        <h3 className="mt-[10px] mb-[14px] font-bold tracking-[.1px] text-[#111]">Vista Vista Principal</h3>
        <p>Id:&nbsp; 603</p>
        <p>Nombre:</p>
        <div className="mt-1 h-[22px] w-[194px] border border-[#666] bg-white pl-[3px] leading-5">Vista Principal</div>
        <hr className="mt-[22px] mb-[18px] w-[194px] border-[#888]" />
        <p>Tamaño vista:</p>
        <p>843x735px</p>
        <p className="mt-[5px] mb-2 pl-[5px] text-[#666] underline underline-offset-2">Ajustar tamaño</p>
        <Spinner label="Margen derecho:" value={132} first />
        <Spinner label="Margen inferior:" value={119} />
        <hr className="mt-4 mb-[18px] w-[194px] border-[#888]" />
        <p>Enlaces:</p>
        <p className="mt-[5px] mb-[7px] pl-[5px] text-[#999]">Enviar enlaces a...</p>
        <LinkRow label="Sector 101" />
        <LinkRow label="Sector 102" />
      </div>
      <h2 className="h-[21px] border-t border-[#666] bg-linear-to-b from-white to-[#dadada] pl-1.5 leading-5 font-bold tracking-[.15px] text-[#111]">Capas</h2>
    </aside>
  );
}

export default function App() {
  return (
    <div className="flex h-[900px] w-[1440px] flex-col overflow-hidden bg-black font-['Noto_Sans','Open_Sans',sans-serif]">
      <MenuBar />
      <TabStrip />
      <AddressBar />
      <Bookmarks />
      <main className="flex h-[779px] gap-1.5 bg-white pt-[10px] pl-2.5">
        <LeftColumn />
        <div className="flex h-[759px] w-[1131px] flex-col border border-[#666]">
          <Toolbar />
          <div className="flex min-h-0 flex-1">
            <div className="flex w-[903px] flex-col">
              <div className="flex h-[595px] border-l border-[#666] bg-[#777]">
                <VenueMap />
                <div className="h-full flex-1 bg-linear-to-r from-[#4c4c4c] to-[#777] to-15%" />
                <VerticalScroll />
              </div>
              <HorizontalScroll />
              <DisplayOptions />
            </div>
            <div className="w-px shrink-0 bg-[#777]" />
            <PropertiesPanel />
          </div>
        </div>
      </main>
    </div>
  );
}
